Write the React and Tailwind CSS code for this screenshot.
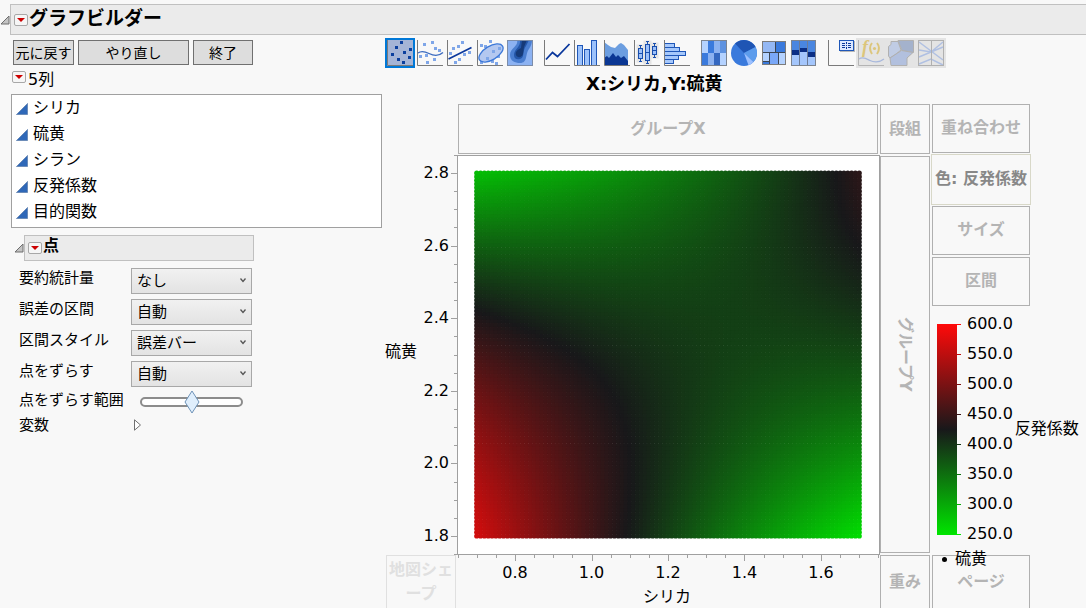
import { useState } from "react";
import clsx from "clsx";

const columns = ["シリカ", "硫黄", "シラン", "反発係数", "目的関数"];

const pointOptions = [
  { id: "summary", label: "要約統計量", options: ["なし", "平均", "中央値"] },
  { id: "interval", label: "誤差の区間", options: ["自動", "なし", "範囲"] },
  { id: "style", label: "区間スタイル", options: ["誤差バー", "帯"] },
  { id: "jitter", label: "点をずらす", options: ["自動", "なし"] },
];

// ---------- color scale ----------
const LOW = [0, 229, 0];
const MID = [24, 24, 26];
const HIGH = [255, 10, 10];

const scaleColor = (t) => {
  const end = t < 0 ? LOW : HIGH;
  const k = Math.min(1, Math.abs(t));
  const [r, g, b] = MID.map((m, i) => Math.round(m + (end[i] - m) * k));
  return `rgb(${r},${g},${b})`;
};

// fitted response, u: left to right, v: top to bottom
const response = (u, v) =>
  -0.8 + 0.4 * u + 2.4 * v + 0.48 * u * u - 2.63 * u * v - 0.8 * v * v;

// ---------- axes ----------
const xPos = (value) => 130 + (value - 0.8) * 382.5;
const yPos = (value) => 18 + (2.8 - value) * 363;

const ticks = (from, count) =>
  Array.from({ length: count }, (_, i) => {
    const value = from + i * 0.05;
    return { value, major: Math.round(value * 100) % 20 === 0 };
  });

const xTicks = ticks(0.65, 23);
const yTicks = ticks(1.75, 23);

const points = [];
for (let row = 0; row <= 100; row++) {
  for (let col = 0; col <= 100; col++) {
    points.push({
      key: `${row}-${col}`,
      x: xPos(0.7 + col / 100),
      y: yPos(2.8 - row / 100),
      fill: scaleColor(response(col / 100, row / 100)),
    });
  }
}

// ---------- small pieces ----------
function RedTriangle({ label }) {
  return (
    <button
      aria-label={label}
      className="flex h-3 w-3.5 shrink-0 items-center justify-center rounded-[2px] border border-[#a8a8a8] bg-[#f6f6f6]"
    >
      <svg width="8" height="4" viewBox="0 0 8 4">
        <path d="M0 0H8L4 4Z" fill="#cc0000" />
      </svg>
    </button>
  );
}

function Disclosure({ label }) {
  return (
    <button aria-label={label} className="shrink-0">
      <svg width="10" height="10" viewBox="0 0 10 10" className="block">
        <path d="M1 9H9V1Z" fill="#c4c4c4" stroke="#6e6e6e" />
      </svg>
    </button>
  );
}

function DropZone({ className, children }) {
  return (
    <div
      className={clsx(
        "flex items-center justify-center whitespace-nowrap border text-center font-bold",
        className
      )}
    >
      {children}
    </div>
  );
}

// ---------- toolbar icons, all on a 26 x 26 grid ----------
const Frame = () => <path d="M.5 0V25.5H26" fill="none" stroke="#7a7a7a" />;

const Dots = ({ at, dark }) =>
  at.map(([x, y]) => (
    <rect
      key={`${x}-${y}`}
      x={x - 1}
      y={y - 1}
      width="3"
      height="3"
      fill={dark ? "#0c3f9e" : "#7fa6e8"}
    />
  ));

const BoxGlyph = ({ x, top, bottom, low, high }) => (
  <g stroke="#1a4fae">
    <rect x={x - 4} y={high - 1} width="8" height={low - high + 2} fill="#e4e4e4" stroke="none" />
    <path d={`M${x} ${high}V${low}M${x - 1.5} ${high}H${x + 1.5}M${x - 1.5} ${low}H${x + 1.5}`} />
    <rect x={x - 2} y={top} width="4" height={bottom - top} fill="#9cc0fa" />
    <path d={`M${x - 2} ${(top + bottom) / 2}H${x + 2}`} />
  </g>
);

const iconGroups = [
  [
    {
      name: "点",
      selected: true,
      art: (
        <>
          <Frame />
          <Dots dark at={[[14, 2], [9, 7], [23, 9], [5, 14], [17, 12], [22, 17], [11, 19], [16, 22]]} />
        </>
      ),
    },
    {
      name: "平滑線",
      art: (
        <>
          <Frame />
          <Dots at={[[7, 4], [15, 2], [18, 8], [22, 10], [3, 16], [9, 15], [17, 19], [10, 22]]} />
          <path d="M1 13C5 10 9 12 12 13.500S21 17 26 12.500" fill="none" stroke="#3a6abf" strokeWidth="1.300" />
        </>
      ),
    },
    {
      name: "直線のあてはめ",
      art: (
        <>
          <Frame />
          <Dots at={[[15, 2], [11, 6], [6, 8], [3, 13], [22, 12], [17, 14], [12, 19], [8, 22]]} />
          <path d="M1.500 19L24.500 7.500" stroke="#0a379c" strokeWidth="1.800" />
        </>
      ),
    },
    {
      name: "楕円",
      art: (
        <>
          <Frame />
          <Dots at={[[13, 1], [4, 5], [8, 6], [4, 22], [15, 21], [19, 23], [21, 16]]} />
          <ellipse cx="14" cy="13" rx="13.500" ry="6.800" transform="rotate(-31 14 13)" fill="#b4c8f0" stroke="#3c78d8" strokeWidth="1.300" />
          <Dots at={[[22, 8], [16, 11], [10, 18]]} />
        </>
      ),
    },
    {
      name: "等高線",
      art: (
        <>
          <rect width="26" height="26" fill="#8cb2f2" />
          <path d="M10 0C12 6 3 8 3 15C3 21 8 23 13 23C21 23 18 14 22 9C24 6 25 3 25 0Z" fill="#4a7ed0" />
          <path d="M13 0C14 7 7 9 7 15C7 19 10 20 13 19C18 18 15 11 19 6L22 0Z" fill="#2456a8" />
          <path d="M15 0L14 8C10 10 8 12 9 15C10 18 15 18 16 14L17 7L20 0Z" fill="#163a78" />
          <rect x=".5" y=".5" width="25" height="25" fill="none" stroke="#7c8ca8" />
        </>
      ),
    },
  ],
  [
    {
      name: "折れ線",
      art: (
        <>
          <Frame />
          <path d="M2 19.500L8.500 12.500L13.500 16.500L25.500 4" fill="none" stroke="#0a379c" strokeWidth="1.800" />
        </>
      ),
    },
    {
      name: "棒",
      art: (
        <>
          <g fill="#9cc2fb" stroke="#1f57b8">
            <rect x="3.500" y="5.500" width="5" height="20" />
            <rect x="10.500" y="9.500" width="5" height="16" />
            <rect x="17.500" y=".5" width="5" height="25" />
          </g>
          <Frame />
        </>
      ),
    },
    {
      name: "面",
      art: (
        <>
          <path d="M0 2L4 5L7 7L11 8L15 4L17 3L20 5L24 10V25H0Z" fill="#6c9ee0" />
          <path d="M0 18L3 16L5 18L9 13L12 17L14 15L17 18L20 16L24 21V25H0Z" fill="#0b3793" />
          <Frame />
        </>
      ),
    },
    {
      name: "箱ひげ図",
      art: (
        <>
          <Frame />
          <BoxGlyph x={6.5} top={8.5} bottom={18.5} high={5.5} low={21.5} />
          <BoxGlyph x={13.5} top={4.5} bottom={20.5} high={1.5} low={23.5} />
          <BoxGlyph x={20.5} top={6.5} bottom={14.5} high={3.5} low={17.5} />
        </>
      ),
    },
    {
      name: "ヒストグラム",
      art: (
        <>
          <g fill="#a6c8fb" stroke="#1f57b8">
            <rect x=".5" y="3.500" width="10" height="4" />
            <rect x=".5" y="7.500" width="15" height="4" />
            <rect x=".5" y="11.500" width="21" height="4" />
            <rect x=".5" y="15.500" width="14" height="4" />
            <rect x=".5" y="19.500" width="9" height="4" />
          </g>
          <Frame />
        </>
      ),
    },
  ],
  [
    {
      name: "ヒートマップ",
      art: (
        <>
          <rect width="7" height="13" fill="#b4d2ff" />
          <rect x="7" width="6" height="13" fill="#3a7adc" />
          <rect x="13" width="6" height="13" fill="#8cb2f0" />
          <rect x="19" width="7" height="13" fill="#5e92e0" />
          <rect y="13" width="7" height="13" fill="#3a7adc" />
          <rect x="7" y="13" width="6" height="13" fill="#8cb2f0" />
          <rect x="13" y="13" width="6" height="13" fill="#3468c0" />
          <rect x="19" y="13" width="7" height="13" fill="#b4d2ff" />
          <rect x=".5" y=".5" width="25" height="25" fill="none" stroke="#7c8490" />
        </>
      ),
    },
    {
      name: "円",
      art: (
        <>
          <circle cx="13" cy="13" r="13" fill="#3a7adc" />
          <path d="M13 13L4 3.600A13 13 0 0 1 24.500 7Z" fill="#1f55b4" />
          <path d="M13 13L24.500 7A13 13 0 0 1 22.500 22Z" fill="#5c9cec" />
          <path d="M13 13L22.500 22A13 13 0 0 1 17.500 25.200Z" fill="#9cc0ff" />
        </>
      ),
    },
    {
      name: "ツリーマップ",
      art: (
        <g stroke="#3c4654">
          <rect x="1.500" y="1.500" width="13" height="11" fill="#94b8f4" />
          <rect x="14.500" y="1.500" width="10" height="11" fill="#3a7adc" />
          <rect x="1.500" y="12.500" width="7" height="9" fill="#b4d2ff" />
          <rect x="1.500" y="21.500" width="7" height="3" fill="#3a7adc" />
          <rect x="8.500" y="12.500" width="9" height="12" fill="#7aa8f8" />
          <rect x="17.500" y="12.500" width="7" height="12" fill="#b4d2ff" />
          <rect x="1.500" y="1.500" width="23" height="23" fill="none" stroke="#7c7c7c" />
        </g>
      ),
    },
    {
      name: "モザイク図",
      art: (
        <>
          <rect width="25" height="26" fill="#a4c6fc" />
          <rect x="1" y="1" width="7" height="9" fill="#4a86e0" />
          <rect x="1" y="10" width="7" height="5" fill="#0b2f86" />
          <rect x="9" y="1" width="7" height="7" fill="#4a86e0" />
          <rect x="9" y="8" width="7" height="4" fill="#0b2f86" />
          <rect x="17" y="1" width="7" height="11" fill="#4a86e0" />
          <rect x="17" y="12" width="7" height="5" fill="#0b2f86" />
          <path d="M8.500 0V25M16.500 0V25" stroke="#6c7c98" />
          <rect x=".5" y=".5" width="24" height="25" fill="none" stroke="#7c8490" />
        </>
      ),
    },
  ],
  [
    {
      name: "キャプションボックス",
      art: (
        <>
          <Frame />
          <rect x="12" y="1" width="15" height="11" fill="#b8b8b8" />
          <rect x="11.500" y=".5" width="14" height="10" fill="#dce8ff" stroke="#1f57b8" />
          <path d="M14 3.500H17M20 3.500H23M14 5.500H17M20 5.500H23M14 7.500H17M20 7.500H23M18.500 2V4M18.500 5V6M18.500 7V9" stroke="#0a379c" />
        </>
      ),
    },
    {
      name: "計算式",
      disabled: true,
      art: (
        <>
          <path d="M.5 0V25.500H26" fill="none" stroke="#b4b4b4" />
          <text x="4" y="13" fontSize="18" fontStyle="italic" fontWeight="bold" fontFamily="Liberation Serif, serif" fill="#dcc67c">f</text>
          <path d="M14 3Q10 8 14 14M19 3Q23 8 19 14" fill="none" stroke="#dcc67c" strokeWidth="2" />
          <circle cx="16.500" cy="8.500" r="1.600" fill="#dcc67c" />
          <path d="M1 19C5 16 9 19 12 20.500S21 23 26 19" fill="none" stroke="#a8b8dc" strokeWidth="1.300" />
        </>
      ),
    },
    {
      name: "地図シェープ",
      disabled: true,
      art: (
        <g stroke="#b0b0b0">
          <path d="M.5 6.500L3 4.500V1.500H10L13 10L8 14L2 18L.5 16Z" fill="#c0ccE4" />
          <path d="M10 .5H25.500V12.500L14 10.500Z" fill="#a4b2cc" />
          <path d="M2 18L13.500 10.500L25 12.500L19 18V25.500H3Z" fill="#b2c0de" />
        </g>
      ),
    },
    {
      name: "パラレルプロット",
      disabled: true,
      art: (
        <>
          <path d="M1 2L13 11L25 20M1 17L13 12L25 7M1 24L13 19L25 25M1 10L13 12L25 2" fill="none" stroke="#b0c0e2" strokeWidth="1.500" />
          <rect x=".5" y=".5" width="25" height="25" fill="none" stroke="#b0b0b0" />
          <path d="M13.500 0V26" stroke="#b0b0b0" />
        </>
      ),
    },
  ],
];

function Toolbar() {
  return (
    <div className="flex h-[30px] gap-[7px]" role="toolbar">
      {iconGroups.map((group, i) => (
        <div key={i} className="flex">
          {group.map(({ name, art, selected, disabled }) => (
            <button
              key={name}
              aria-label={name}
              aria-pressed={!!selected}
              disabled={disabled}
              className={clsx(
                "size-[30px] border-2",
                selected ? "border-[#0078d7] bg-[#a5b4d6]" : "border-transparent",
                disabled && "bg-[#e4e4e4]"
              )}
            >
              <svg width="26" height="26" viewBox="0 0 26 26" className="block overflow-visible">
                {art}
              </svg>
            </button>
          ))}
        </div>
      ))}
    </div>
  );
}

// ---------- left side ----------
function PointPanel() {
  const [range, setRange] = useState(50);

  return (
    <section className="pl-[14px] pt-[7px]">
      <div className="flex items-center">
        <Disclosure label="点を閉じる" />
        <div className="flex h-[26px] w-[230px] items-center border border-[#c0c0c0] bg-[#ebebeb] pl-[3px]">
          <RedTriangle label="点のメニュー" />
          <h2 className="pl-px pb-1 text-base leading-5 font-bold">点</h2>
        </div>
      </div>

      <div className="pl-[5px] pt-[7px] text-[15px] leading-5">
        <div className="flex flex-col gap-[5px]">
          {pointOptions.map(({ id, label, options }) => (
            <div key={id} className="flex">
              <label htmlFor={id} className="w-28 shrink-0">{label}</label>
              <div className="relative w-[121px]">
                <select
                  id={id}
                  className="block h-[26px] w-full appearance-none border border-[#a8a8a8] bg-linear-to-b from-[#f1f1f1] to-[#e3e3e3] pl-[5px] text-[15px] leading-5"
                >
                  {options.map((o) => <option key={o}>{o}</option>)}
                </select>
                <svg width="6" height="5" viewBox="0 0 6 5" className="pointer-events-none absolute top-2.5 right-1.5">
                  <path d="M.5 .5L3 3.500L5.500 .5" fill="none" stroke="#555" strokeWidth="1.300" />
                </svg>
              </div>
            </div>
          ))}
        </div>

        <div className="mt-[3px] mb-[5px] flex h-5 items-center">
          <label htmlFor="range" className="w-[121px] shrink-0 whitespace-nowrap">点をずらす範囲</label>
          <div className="relative mt-1 h-2.5 w-[103px] rounded-full border-2 border-[#8c8c8c] bg-white">
            <input
              id="range"
              type="range"
              value={range}
              onChange={(e) => setRange(Number(e.target.value))}
              className="absolute inset-0 w-full opacity-0"
            />
            <svg
              width="16"
              height="24"
              viewBox="0 0 16 24"
              className="pointer-events-none absolute top-1/2 -translate-x-1/2 -translate-y-1/2"
              style={{ left: `${range}%` }}
            >
              <path d="M8 1L15 12L8 23L1 12Z" fill="#dfeefc" stroke="#6f93b8" />
            </svg>
          </div>
        </div>

        <div className="flex items-center">
          <span className="w-[115px]">変数</span>
          <button aria-label="変数を開く">
            <svg width="8" height="12" viewBox="0 0 8 12" className="block">
              <path d="M.5 .8V11.200L6.500 6Z" fill="#fff" stroke="#707070" />
            </svg>
          </button>
        </div>
      </div>
    </section>
  );
}

function ControlPanel() {
  return (
    <aside className="w-[385px] shrink-0 pt-[5px]">
      <div className="flex gap-1 pl-[13px] text-sm leading-5">
        <button className="h-[25px] w-[61px] border border-[#707070] bg-[#dddddd]">元に戻す</button>
        <button className="h-[25px] w-[111px] border border-[#707070] bg-[#dddddd]">やり直し</button>
        <button className="h-[25px] w-[60px] border border-[#707070] bg-[#dddddd]">終了</button>
      </div>

      <div className="flex h-[29px] items-center gap-0.5 pl-3">
        <div className="pb-1.5"><RedTriangle label="列のメニュー" /></div>
        <span className="leading-5">5列</span>
      </div>

      <ul className="mr-[3px] ml-[11px] border border-[#a0a0a0] bg-white pb-0.5">
        {columns.map((name) => (
          <li key={name} className="flex h-[26px] items-center gap-[5px] pl-1">
            <svg width="12" height="12" viewBox="0 0 12 12" className="mt-0.5">
              <path d="M.5 11.500H11.500V.5Z" fill="#2f68b8" stroke="#6c8cb8" />
            </svg>
            <span className="leading-5">{name}</span>
          </li>
        ))}
      </ul>

      <PointPanel />
    </aside>
  );
}

// ---------- chart ----------
function Chart() {
  return (
    <svg viewBox="0 0 495 453" className="col-span-2 col-start-1 row-span-2 row-start-2 block w-full">
      <rect x="72.500" y=".5" width="422" height="399" fill="#fff" stroke="#a0a0a0" />

      {points.map((p) => (
        <circle key={p.key} cx={p.x} cy={p.y} r="2.600" fill={p.fill} />
      ))}

      <g stroke="#a0a0a0" shapeRendering="crispEdges">
        {xTicks.map(({ value, major }) => (
          <path key={value} d={`M${Math.round(xPos(value)) + 0.5} 400v${major ? 6 : 3}`} />
        ))}
        {yTicks.map(({ value, major }) => (
          <path key={value} d={`M72 ${Math.round(yPos(value)) + 0.5}h${major ? -6 : -3}`} />
        ))}
      </g>

      <g fontSize="16" fill="#000">
        {xTicks.filter((t) => t.major).map(({ value }) => (
          <text key={value} x={xPos(value)} y="423" textAnchor="middle">{value.toFixed(1)}</text>
        ))}
        {yTicks.filter((t) => t.major).map(({ value }) => (
          <text key={value} x="64" y={yPos(value) + 5} textAnchor="end">{value.toFixed(1)}</text>
        ))}
        <text x="282" y="447" textAnchor="middle">シリカ</text>
        <text x="0" y="202">硫黄</text>
      </g>
    </svg>
  );
}

function Legend() {
  const values = [600, 550, 500, 450, 400, 350, 300, 250];
  return (
    <div className="flex items-center pt-[3px] pl-[5px]">
      <div className="h-[211px] w-5 shrink-0 bg-linear-to-b/srgb from-[#ff0a0a] via-[#18181a] to-[#00e500]" />
      <ul>
        {values.map((v) => (
          <li key={v} className="flex h-[30px] items-center gap-1.5">
            <span className="h-px w-1" style={{ background: scaleColor((v - 425) / 175) }} />
            <span className="leading-5">{v.toFixed(1)}</span>
          </li>
        ))}
      </ul>
      <span className="pl-0.5 whitespace-nowrap">反発係数</span>
    </div>
  );
}

function GraphArea() {
  return (
    <main className="min-w-0 flex-1 pt-[3px]">
      <Toolbar />
      <h2 className="h-9 pt-1 pl-[201px] text-lg leading-6 font-bold">X:シリカ,Y:硫黄</h2>

      <div className="grid grid-cols-[72px_minmax(0,1fr)_52px_154px] grid-rows-[51px_auto_53px]">
        <DropZone className="col-start-2 mr-0.5 mb-px ml-px border-[#b0b0b0] text-[#b4b4b4]">グループX</DropZone>
        <DropZone className="col-start-3 mr-0.5 mb-px border-[#b0b0b0] text-[#b4b4b4]">段組</DropZone>

        <Chart />

        <DropZone className="col-start-3 row-start-2 mt-px mr-0.5 mb-0.5 border-[#b0b0b0] text-[#b4b4b4]">
          <span className="[text-orientation:sideways] [writing-mode:vertical-rl]">グループY</span>
        </DropZone>

        <div className="col-start-4 row-span-2 row-start-1">
          <DropZone className="mb-px h-[49px] w-[98px] border-[#b0b0b0] pb-0.5 text-[#b4b4b4]">重ね合わせ</DropZone>
          <DropZone className="-ml-px mb-px h-[51px] w-[100px] border-[#d8d8c8] pb-0.5 text-[#888888]">色: 反発係数</DropZone>
          <DropZone className="mb-0.5 h-[49px] w-[98px] border-[#b0b0b0] pb-0.5 text-[#b4b4b4]">サイズ</DropZone>
          <DropZone className="h-[49px] w-[98px] border-[#b0b0b0] pb-0.5 text-[#b4b4b4]">区間</DropZone>
          <Legend />
        </div>

        <DropZone className="col-start-1 row-start-3 mr-px ml-px border-b-0 border-[#e0e0e0] leading-6 text-[#e0e0e0]">
          地図シェ<br />ープ
        </DropZone>
        <DropZone className="col-start-3 row-start-3 mr-0.5 border-b-0 border-[#b0b0b0] text-[#b4b4b4]">重み</DropZone>
        <div className="relative col-start-4 row-start-3 flex w-[98px]">
          <DropZone className="flex-1 border-b-0 border-[#b0b0b0] text-[#b4b4b4]">ページ</DropZone>
          <div className="absolute -top-1.5 left-2.5 flex items-center gap-2 leading-5">
            <span className="size-[5px] rounded-full bg-black" />
            硫黄
          </div>
        </div>
      </div>
    </main>
  );
}

export default function App() {
  return (
    <div className="h-screen overflow-hidden bg-[#f8f8f8] pt-1 font-['DejaVu_Sans','Noto_Sans_CJK_JP',sans-serif] text-base text-black">
      <header className="flex items-center">
        <Disclosure label="グラフビルダーを閉じる" />
        <div className="flex h-[31px] flex-1 items-center border border-r-0 border-[#c0c0c0] bg-[#ebebeb] pl-[3px]">
          <RedTriangle label="グラフビルダーのメニュー" />
          <h1 className="pb-1 pl-px text-[19px] leading-6 font-bold">グラフビルダー</h1>
        </div>
      </header>

      <div className="flex">
        <ControlPanel />
        <GraphArea />
      </div>
    </div>
  );
}
